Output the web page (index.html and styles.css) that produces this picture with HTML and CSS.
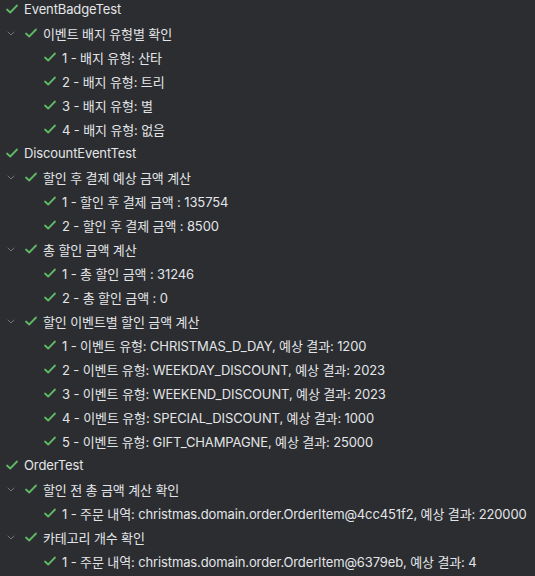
FILE: index.html
```html
<!DOCTYPE html>
<html lang="ko">
<head>
<meta charset="utf-8">
<link rel="stylesheet" href="styles.css">
</head>
<body>
<svg width="0" height="0" class="defs">
  <defs>
    <symbol id="check" viewBox="0 0 16 16"><path d="M3 8.5 L6.2 11.5 L13 4.5" fill="none" stroke="#5fb865" stroke-width="1.8" stroke-linecap="round" stroke-linejoin="round"/></symbol>
    <symbol id="chev" viewBox="0 0 16 16"><path d="M5 7 L8 10 L11 7" fill="none" stroke="#6f737a" stroke-width="1" stroke-linecap="round" stroke-linejoin="round"/></symbol>
  </defs>
</svg>
<div class="tree">
  <div class="row l0"><svg class="ic"><use href="#check"/></svg><span>EventBadgeTest</span></div>
  <div class="row l1"><svg class="ic chev"><use href="#chev"/></svg><svg class="ic"><use href="#check"/></svg><span>이벤트 배지 유형별 확인</span></div>
  <div class="row l2"><svg class="ic"><use href="#check"/></svg><span>1 - 배지 유형: 산타</span></div>
  <div class="row l2"><svg class="ic"><use href="#check"/></svg><span>2 - 배지 유형: 트리</span></div>
  <div class="row l2"><svg class="ic"><use href="#check"/></svg><span>3 - 배지 유형: 별</span></div>
  <div class="row l2"><svg class="ic"><use href="#check"/></svg><span>4 - 배지 유형: 없음</span></div>
  <div class="row l0"><svg class="ic"><use href="#check"/></svg><span>DiscountEventTest</span></div>
  <div class="row l1"><svg class="ic chev"><use href="#chev"/></svg><svg class="ic"><use href="#check"/></svg><span>할인 후 결제 예상 금액 계산</span></div>
  <div class="row l2"><svg class="ic"><use href="#check"/></svg><span>1 - 할인 후 결제 금액 : 135754</span></div>
  <div class="row l2"><svg class="ic"><use href="#check"/></svg><span>2 - 할인 후 결제 금액 : 8500</span></div>
  <div class="row l1"><svg class="ic chev"><use href="#chev"/></svg><svg class="ic"><use href="#check"/></svg><span>총 할인 금액 계산</span></div>
  <div class="row l2"><svg class="ic"><use href="#check"/></svg><span>1 - 총 할인 금액 : 31246</span></div>
  <div class="row l2"><svg class="ic"><use href="#check"/></svg><span>2 - 총 할인 금액 : 0</span></div>
  <div class="row l1"><svg class="ic chev"><use href="#chev"/></svg><svg class="ic"><use href="#check"/></svg><span>할인 이벤트별 할인 금액 계산</span></div>
  <div class="row l2"><svg class="ic"><use href="#check"/></svg><span>1 - 이벤트 유형: CHRISTMAS_D_DAY, 예상 결과: 1200</span></div>
  <div class="row l2"><svg class="ic"><use href="#check"/></svg><span>2 - 이벤트 유형: WEEKDAY_DISCOUNT, 예상 결과: 2023</span></div>
  <div class="row l2"><svg class="ic"><use href="#check"/></svg><span>3 - 이벤트 유형: WEEKEND_DISCOUNT, 예상 결과: 2023</span></div>
  <div class="row l2"><svg class="ic"><use href="#check"/></svg><span>4 - 이벤트 유형: SPECIAL_DISCOUNT, 예상 결과: 1000</span></div>
  <div class="row l2"><svg class="ic"><use href="#check"/></svg><span>5 - 이벤트 유형: GIFT_CHAMPAGNE, 예상 결과: 25000</span></div>
  <div class="row l0"><svg class="ic"><use href="#check"/></svg><span>OrderTest</span></div>
  <div class="row l1"><svg class="ic chev"><use href="#chev"/></svg><svg class="ic"><use href="#check"/></svg><span>할인 전 총 금액 계산 확인</span></div>
  <div class="row l2"><svg class="ic"><use href="#check"/></svg><span>1 - 주문 내역: christmas.domain.order.OrderItem@4cc451f2, 예상 결과: 220000</span></div>
  <div class="row l1"><svg class="ic chev"><use href="#chev"/></svg><svg class="ic"><use href="#check"/></svg><span>카테고리 개수 확인</span></div>
  <div class="row l2"><svg class="ic"><use href="#check"/></svg><span>1 - 주문 내역: christmas.domain.order.OrderItem@6379eb, 예상 결과: 4</span></div>
</div>
</body>
</html>
```
FILE: styles.css
```css
html, body {
  margin: 0;
  padding: 0;
  background: #2b2d30;
  overflow: hidden;
}
.defs {
  position: absolute;
  width: 0;
  height: 0;
}
.tree {
  display: flex;
  flex-direction: column;
  margin-top: -3px;
  font-family: "Inter", "Noto Sans CJK KR", sans-serif;
  font-size: 13px;
  letter-spacing: -0.12px;
  color: #e3e5e8;
}
.row {
  height: 24px;
  display: flex;
  align-items: center;
  white-space: nowrap;
}
.ic {
  width: 16px;
  height: 16px;
  flex: none;
  margin-right: 4px;
}
.l0 { padding-left: 4px; }
.l1 { padding-left: 3px; }
.l2 { padding-left: 42px; }
```
